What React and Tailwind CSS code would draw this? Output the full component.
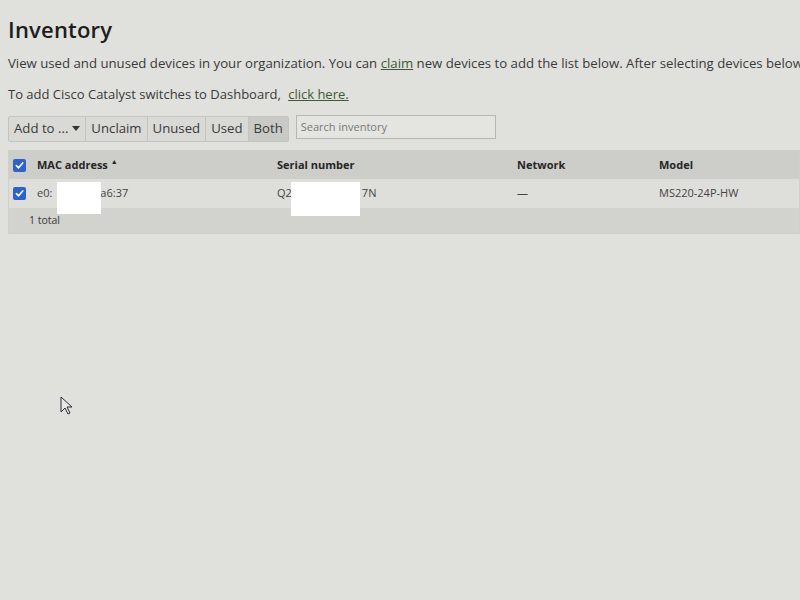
import React from 'react';

const font = { fontFamily: '"Open Sans", "Liberation Sans", sans-serif' };

function Check() {
  return (
    <span className="inline-flex h-[13px] w-[13px] items-center justify-center rounded-[2px] bg-[#2f62c8]">
      <svg width="9" height="9" viewBox="0 0 10 10" fill="none">
        <path d="M1.5 5.2 4 7.6 8.6 2.2" stroke="white" strokeWidth="1.8" strokeLinecap="round" strokeLinejoin="round" />
      </svg>
    </span>
  );
}

export default function App() {
  const tabs = ['Unclaim', 'Unused', 'Used', 'Both'];
  return (
    <div className="relative h-[600px] w-[800px] overflow-hidden bg-[#e0e0dc] text-[#2e2e2e]" style={font}>
      <div className="pl-2 pt-[14px]">
        <h1 className="text-[22px] font-semibold leading-[30px] tracking-[0.2px] text-[#1d1d1d]">Inventory</h1>
        <p className="mt-[10px] whitespace-nowrap text-[13.2px] leading-[18px] text-[#3a3a3a]">
          View used and unused devices in your organization. You can{' '}
          <span className="text-[#3e5a36] underline">claim</span> new devices to add the list below. After selecting devices below
        </p>
        <p className="mt-[13px] whitespace-nowrap text-[13px] leading-[18px] text-[#3a3a3a]">
          To add Cisco Catalyst switches to Dashboard,{' '}
          <span className="ml-1 text-[#3e5a36] underline">click here.</span>
        </p>

        <div className="mt-[12px] flex items-center gap-[7px]">
          <div className="flex h-[26px] rounded-[2px] border border-[#c4c4c0] bg-[#d9d9d5] text-[13.2px] text-[#3a3a3a]">
            <div className="flex items-center gap-1 border-r border-[#c4c4c0] px-[5px]">
              Add to ...
              <svg width="8" height="5" viewBox="0 0 8 5"><path d="M0 0h8L4 5z" fill="#333" /></svg>
            </div>
            {tabs.map((t, i) => (
              <div
                key={t}
                className={`flex items-center px-[5px] ${i < tabs.length - 1 ? 'border-r border-[#c4c4c0]' : ''} ${t === 'Both' ? 'bg-[#c9c9c5]' : ''}`}
              >
                {t}
              </div>
            ))}
          </div>
          <div className="mb-[3px] flex h-[24px] w-[200px] items-center border border-[#b6b6b2] bg-[#e4e4e0] px-[4px] text-[11px] text-[#7a7a78]">
            Search inventory
          </div>
        </div>

        <div className="mt-[8px] border border-[#cfcfcb] text-[11px]">
          <div className="flex h-[28px] items-center bg-[#cdcdc9] font-bold text-[#262626]">
            <div className="flex w-[28px] pl-[4px]"><Check /></div>
            <div className="w-[240px]">MAC address <span className="align-top text-[7px]">▲</span></div>
            <div className="w-[240px]">Serial number</div>
            <div className="w-[142px]">Network</div>
            <div>Model</div>
          </div>
          <div className="flex h-[29px] items-stretch bg-[#dededa] text-[#444]">
            <div className="flex w-[28px] items-center pl-[4px]"><Check /></div>
            <div className="relative flex w-[240px] items-center">
              e0:<span className="inline-block w-[48px]" />a6:37
              <span className="absolute left-[20px] top-[3px] h-[32px] w-[44px] bg-white" />
            </div>
            <div className="relative flex w-[240px] items-center">
              Q2<span className="inline-block w-[70px]" />7N
              <span className="absolute left-[14px] top-[3px] h-[34px] w-[69px] bg-white" />
            </div>
            <div className="flex w-[142px] items-center">—</div>
            <div className="flex items-center">MS220-24P-HW</div>
          </div>
          <div className="flex h-[25px] items-center bg-[#d2d2ce] pl-[20px] text-[10.5px] text-[#3a3a3a]">1 total</div>
        </div>
      </div>

      <svg className="absolute left-[60px] top-[396px]" width="14" height="20" viewBox="0 0 14 20">
        <path d="M1 1v15l4-4 3 6 2-1-3-6h5z" fill="#e8e8e4" stroke="#2a2a40" strokeWidth="1" strokeLinejoin="round" />
      </svg>
    </div>
  );
}
